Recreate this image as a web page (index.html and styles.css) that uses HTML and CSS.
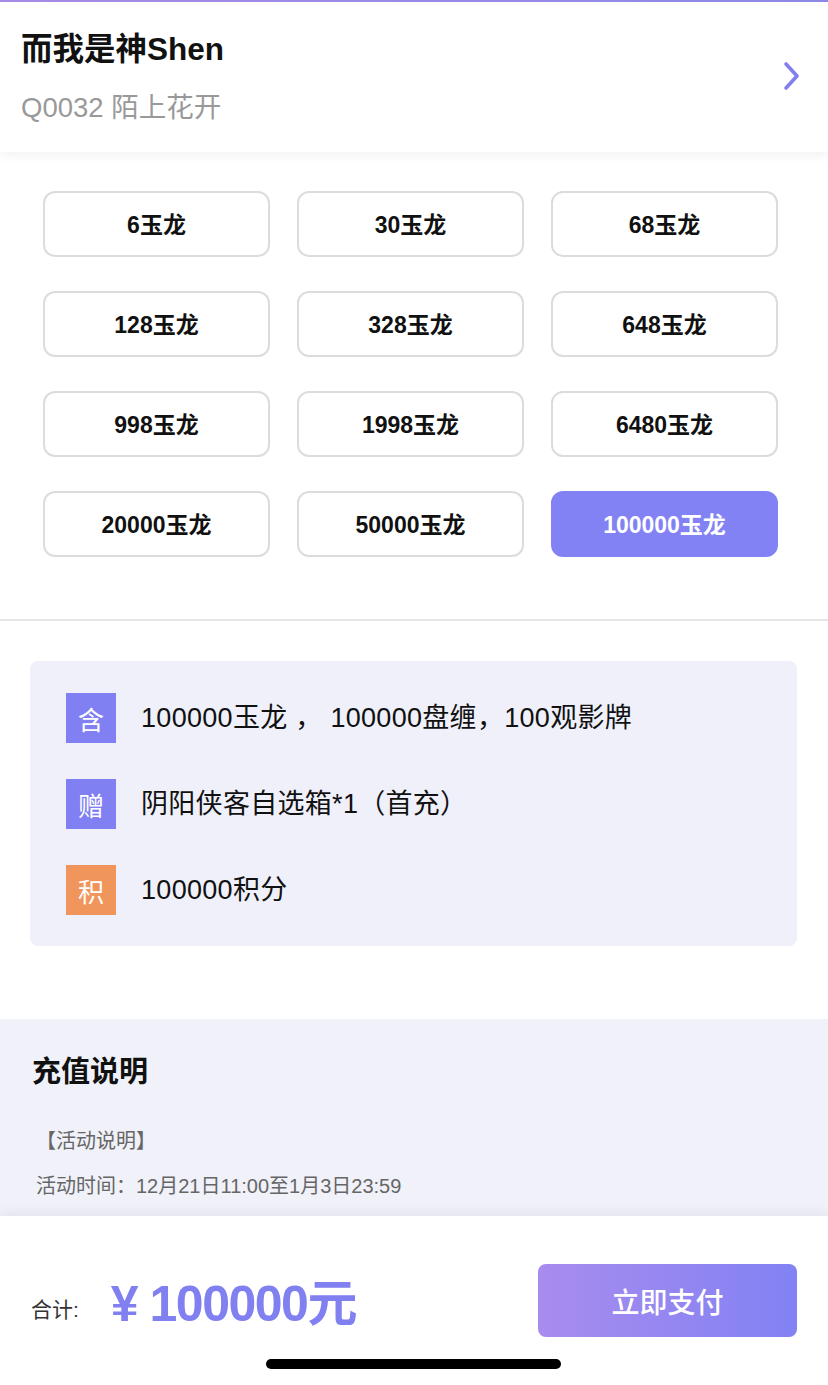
FILE: index.html
```html
<!DOCTYPE html>
<html lang="zh-CN">
<head>
<meta charset="utf-8">
<title>充值</title>
<link rel="stylesheet" href="styles.css">
</head>
<body>
<div class="page">
  <div class="main">
    <div class="topline"></div>
    <header class="header">
      <div class="header-text">
        <div class="title">而我是神Shen</div>
        <div class="subtitle">Q0032 陌上花开</div>
      </div>
      <svg class="chevron" width="20" height="32" viewBox="0 0 20 32">
        <path d="M4 4 L15 16 L4 28" fill="none" stroke="#7f7ff0" stroke-width="3.6" stroke-linecap="round" stroke-linejoin="round"/>
      </svg>
    </header>

    <div class="grid">
      <div class="opt">6玉龙</div>
      <div class="opt">30玉龙</div>
      <div class="opt">68玉龙</div>
      <div class="opt">128玉龙</div>
      <div class="opt">328玉龙</div>
      <div class="opt">648玉龙</div>
      <div class="opt">998玉龙</div>
      <div class="opt">1998玉龙</div>
      <div class="opt">6480玉龙</div>
      <div class="opt">20000玉龙</div>
      <div class="opt">50000玉龙</div>
      <div class="opt active">100000玉龙</div>
    </div>

    <div class="divider"></div>

    <div class="info">
      <div class="info-row"><span class="badge">含</span><span class="info-text">100000玉龙 ， 100000盘缠，100观影牌</span></div>
      <div class="info-row"><span class="badge">赠</span><span class="info-text">阴阳侠客自选箱*1（首充）</span></div>
      <div class="info-row"><span class="badge orange">积</span><span class="info-text">100000积分</span></div>
    </div>

    <section class="desc">
      <h2 class="desc-title">充值说明</h2>
      <p class="desc-line">【活动说明】</p>
      <p class="desc-line">活动时间：12月21日11:00至1月3日23:59</p>
    </section>
  </div>

  <footer class="footer">
    <div class="footer-row">
      <div class="total">
        <span class="total-label">合计:</span>
        <span class="total-price">¥ 100000元</span>
      </div>
      <button class="pay">立即支付</button>
    </div>
    <div class="home-indicator"></div>
  </footer>
</div>
</body>
</html>
```

FILE: styles.css
```css
* { box-sizing: border-box; }
html, body {
  margin: 0;
  padding: 0;
  background: #fff;
  font-family: "Liberation Sans", "Noto Sans CJK SC", sans-serif;
  color: #111;
}
.page {
  width: 828px;
  height: 1385px;
  display: flex;
  flex-direction: column;
  overflow: hidden;
}
.main {
  flex: 1;
  overflow: hidden;
}
.topline {
  height: 2px;
  background: linear-gradient(90deg, #a88ce8, #8e8ae8);
}
.header {
  height: 150px;
  padding: 0 26px 0 21px;
  display: flex;
  align-items: flex-start;
  justify-content: space-between;
  background: #fff;
  box-shadow: 0 4px 10px rgba(0, 0, 0, 0.05);
  position: relative;
}
.header-text {
  padding-top: 27px;
}
.title {
  font-size: 31.5px;
  font-weight: bold;
  line-height: 40px;
  color: #111;
}
.subtitle {
  font-size: 27.5px;
  line-height: 36px;
  margin-top: 21px;
  color: #999;
}
.chevron {
  margin-top: 58px;
}
.grid {
  display: grid;
  grid-template-columns: repeat(3, 227px);
  grid-auto-rows: 66px;
  column-gap: 27px;
  row-gap: 34px;
  padding: 39px 0 0 43px;
}
.opt {
  border: 2px solid #dcdcdc;
  border-radius: 12px;
  display: flex;
  align-items: center;
  justify-content: center;
  font-size: 23px;
  font-weight: bold;
  color: #111;
  padding-bottom: 3px;
}
.opt.active {
  background: #8282f4;
  border-color: #8282f4;
  color: #fff;
}
.divider {
  height: 2px;
  background: #e6e6e6;
  margin-top: 62px;
}
.info {
  margin: 40px 31px 0 30px;
  height: 285px;
  background: #f0f0fa;
  border-radius: 8px;
  padding: 32px 36px 0;
  display: flex;
  flex-direction: column;
  gap: 36px;
}
.info-row {
  display: flex;
  align-items: center;
  gap: 25px;
  height: 50px;
}
.badge {
  width: 50px;
  height: 50px;
  display: flex;
  align-items: center;
  justify-content: center;
  background: #8080f2;
  color: #fff;
  font-size: 26px;
}
.badge.orange {
  background: #f0965c;
}
.info-text {
  font-size: 27px;
  color: #111;
  margin-top: -5px;
  letter-spacing: 0.3px;
}
.desc {
  margin-top: 73px;
  background: #f0f1f9;
  padding: 33px 0 0 32px;
  height: 400px;
}
.desc-title {
  margin: 0;
  font-size: 29px;
  line-height: 40px;
  font-weight: bold;
  color: #111;
}
.desc-line {
  margin: 0;
  padding-left: 4px;
  font-size: 20px;
  line-height: 45px;
  color: #666;
}
.desc-title + .desc-line {
  margin-top: 27px;
}
.footer {
  height: 169px;
  background: #fff;
  box-shadow: 0 -4px 12px rgba(0, 0, 0, 0.06);
  position: relative;
  padding-top: 48px;
}
.footer-row {
  display: flex;
  align-items: center;
  justify-content: space-between;
  padding: 0 31px 0 31px;
  height: 73px;
}
.total {
  display: flex;
  align-items: center;
}
.total-label {
  font-size: 21px;
  color: #333;
  margin-top: 14px;
}
.total-price {
  margin-left: 32px;
  font-size: 50px;
  font-weight: bold;
  color: #8080f0;
  letter-spacing: -1.5px;
  margin-top: -4px;
}
.pay {
  width: 259px;
  height: 73px;
  border: none;
  border-radius: 8px;
  background: linear-gradient(90deg, #a88cee, #8282f4);
  color: #fff;
  font-family: "Liberation Sans", "Noto Sans CJK SC", sans-serif;
  font-size: 28px;
  font-weight: 500;
}
.home-indicator {
  width: 295px;
  height: 10px;
  margin: 22px 0 0 266px;
  border-radius: 5px;
  background: #000;
}
```
